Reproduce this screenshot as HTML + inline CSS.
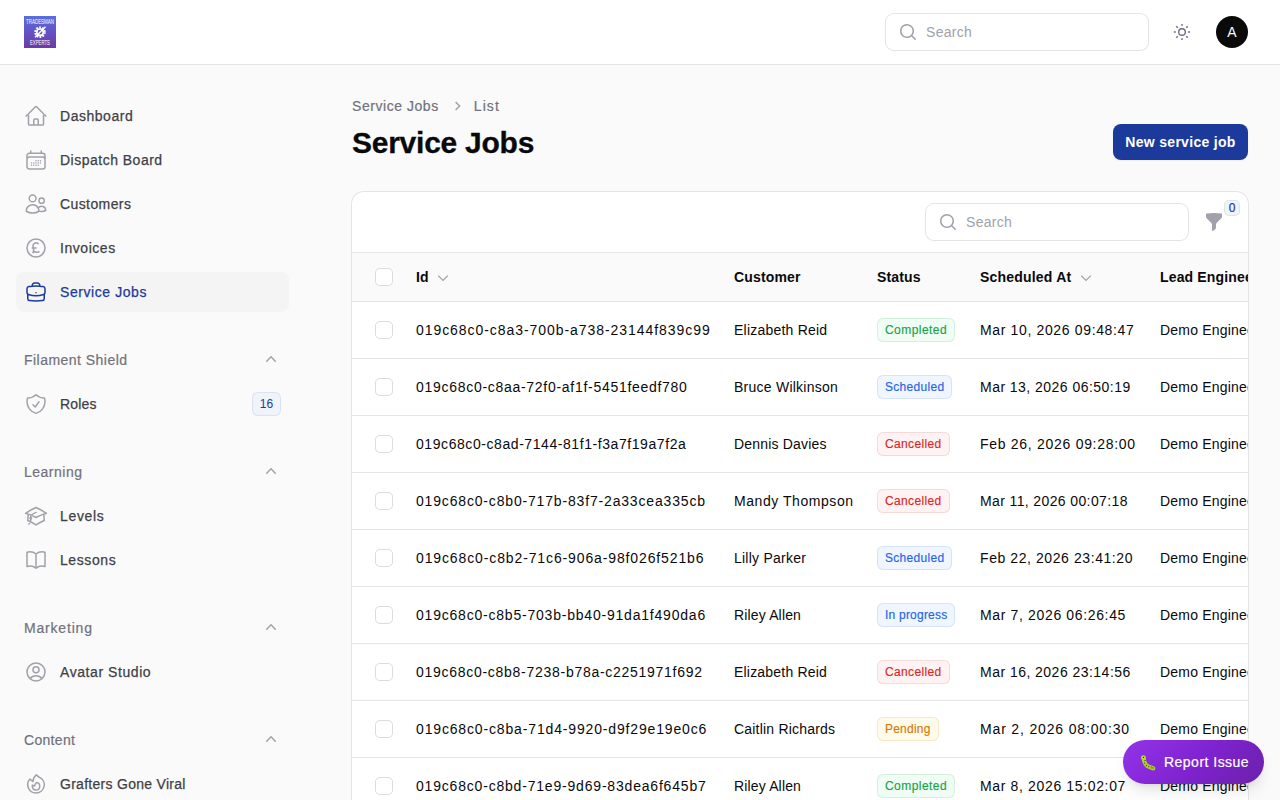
<!DOCTYPE html>
<html><head><meta charset="utf-8">
<style>
*{box-sizing:border-box;margin:0;padding:0}
html,body{width:1280px;height:800px;overflow:hidden;background:#fafafa;font-family:"Liberation Sans",sans-serif;color:#09090b}
.abs{position:absolute}
svg{display:block}
/* topbar */
#top{position:absolute;left:0;top:0;width:1280px;height:64px;background:#fff;box-shadow:0 1px 0 #e5e5e5,0 1px 2px rgba(0,0,0,.03)}
#logo{left:24px;top:16px;width:32px;height:32px;background:linear-gradient(180deg,#5a6fdc 0%,#6452c4 50%,#6c3aa6 100%);overflow:hidden}
.inp{position:absolute;background:#fff;border-radius:8px;box-shadow:0 0 0 1px #e4e4e7,0 1px 2px rgba(0,0,0,.04)}
.ph{position:absolute;font-size:14px;color:#a1a1aa;line-height:20px;letter-spacing:.3px}
#avatar{left:1216px;top:16px;width:32px;height:32px;border-radius:50%;background:#0a0a0a;color:#fff;font-size:14px;line-height:32px;text-align:center}
/* sidebar */
.nav{position:absolute;left:16px;width:273px;height:40px;border-radius:8px;display:flex;align-items:center;padding-left:8px}
.nav.active{background:#f4f4f5}
.nav svg{width:24px;height:24px;flex:none;color:#a1a1aa}
.nav span{margin-left:12px;font-size:14px;font-weight:500;color:#3f3f46;line-height:20px;letter-spacing:.4px;-webkit-text-stroke:.25px currentColor}
.nav.active svg,.nav.active span{color:#1b3a9b}
.grp{position:absolute;left:24px;width:257px;height:20px;font-size:14px;color:#71717a;line-height:20px;letter-spacing:.44px;-webkit-text-stroke:.2px currentColor}
.grp svg{position:absolute;right:0px;top:-1px;width:20px;height:20px;color:#a1a1aa}
.badge16{position:absolute;left:252px;top:392px;width:29px;height:24px;border-radius:6px;background:#f1f3fb;box-shadow:inset 0 0 0 1px #dde2f3;color:#1b3a9b;font-size:12px;line-height:24px;text-align:center;font-weight:500}
/* main */
#bc{left:352px;top:96px;height:20px;font-size:14px;line-height:20px;color:#71717a;display:flex;align-items:center;-webkit-text-stroke:.2px currentColor}
#title{left:352px;top:125px;font-size:30px;line-height:36px;font-weight:bold;color:#09090b;letter-spacing:-.25px;-webkit-text-stroke:.3px currentColor}
#newbtn{left:1113px;top:124px;width:135px;height:36px;border-radius:8px;background:#1b3a9b;color:#fff;font-size:14px;font-weight:bold;line-height:36px;text-align:center;letter-spacing:.3px;box-shadow:0 1px 2px rgba(0,0,0,.05)}
#card{left:352px;top:192px;width:896px;height:620px;background:#fff;border-radius:12px;box-shadow:0 0 0 1px #e5e5e5,0 1px 2px rgba(0,0,0,.04);overflow:hidden}
.thead{position:absolute;left:0;top:60px;width:896px;height:50px;background:#fafafa;border-top:1px solid #e5e5e5;border-bottom:1px solid #e5e5e5}
.th{position:absolute;top:0;height:48px;line-height:48px;font-size:14px;font-weight:bold;color:#09090b;white-space:nowrap}
.row{position:absolute;left:0;width:896px;height:57px;border-bottom:1px solid #e5e5e5}
.cb{position:absolute;left:24px;width:16px;height:16px;border-radius:4px;background:#fff;box-shadow:0 0 0 1px #dcdce0}
.td{position:absolute;top:0;height:56px;line-height:56px;font-size:14px;color:#09090b;white-space:nowrap}
.id{left:64px;letter-spacing:.96px}
.cu{left:382px;letter-spacing:.2px}
.dt{left:628px;letter-spacing:.62px}
.le{left:808px;letter-spacing:.2px}
.st{position:absolute;left:525px;top:16px;height:24px;border-radius:6px;font-size:12px;line-height:24px;padding:0 8px;font-weight:500;letter-spacing:.35px;-webkit-text-stroke:.15px currentColor}
.g{background:#f0fdf4;color:#16a34a;box-shadow:inset 0 0 0 1px #d3f1dc}
.b{background:#eff6ff;color:#2563eb;box-shadow:inset 0 0 0 1px #d5e3fb}
.r{background:#fef2f2;color:#dc2626;box-shadow:inset 0 0 0 1px #f8d9d9}
.y{background:#fffbeb;color:#d97706;box-shadow:inset 0 0 0 1px #f8e8c8}
#report{left:1123px;top:740px;width:141px;height:44px;border-radius:22px;background:linear-gradient(135deg,#9333ea 0%,#7e22ce 55%,#6b21a8 100%);box-shadow:0 10px 15px -3px rgba(0,0,0,.1),0 4px 6px -4px rgba(0,0,0,.1);color:#fff;font-size:14px;font-weight:500;line-height:44px}
</style></head><body>

<div id="top">
  <div id="logo" class="abs">
    <svg width="32" height="32" viewBox="0 0 32 32">
      <text x="16" y="8.4" fill="#fff" font-size="6.6" font-family="Liberation Sans" text-anchor="middle" textLength="28" lengthAdjust="spacingAndGlyphs">TRADESMAN</text>
      <g transform="translate(16 16.2)" fill="none" stroke="#fff">
        <circle r="4.6" stroke-width="2.4" stroke-dasharray="1.7 1.2"/>
        <circle r="3.2" stroke-width="1.6"/>
        <path d="M-5 5 L5.5 -5.5" stroke-width="1.4"/>
      </g>
      <text x="16" y="29.3" fill="#fff" font-size="6.6" font-family="Liberation Sans" text-anchor="middle" textLength="20" lengthAdjust="spacingAndGlyphs">EXPERTS</text>
    </svg>
  </div>
  <div class="inp" style="left:886px;top:14px;width:262px;height:36px">
    <svg class="abs" style="left:12px;top:8px" width="20" height="20" viewBox="0 0 20 20" fill="#a1a1aa"><path fill-rule="evenodd" d="M9 3.5a5.5 5.5 0 100 11 5.5 5.5 0 000-11zM2 9a7 7 0 1112.452 4.391l3.328 3.329a.75.75 0 11-1.06 1.06l-3.329-3.328A7 7 0 012 9z"/></svg>
    <div class="ph" style="left:40px;top:8px">Search</div>
  </div>
  <svg class="abs" style="left:1172px;top:22px" width="20" height="20" viewBox="0 0 20 20" stroke="#6b7280" fill="none" stroke-width="1.5" stroke-linecap="butt">
    <circle cx="10" cy="10" r="3.3" stroke-width="1.4"/>
    <path d="M10 1.9V3.85M10 16.15V18.1M1.9 10H3.85M16.15 10H18.1M4.27 4.27L5.76 5.76M15.73 4.27L14.24 5.76M4.27 15.73L5.76 14.24M15.73 15.73L14.24 14.24"/>
  </svg>
  <div id="avatar" class="abs">A</div>
</div>

<!-- sidebar -->
<div id="side">
<div class="nav" style="top:96px"><svg viewBox="0 0 24 24" fill="none" stroke="currentColor" stroke-width="1.5" stroke-linecap="round" stroke-linejoin="round"><path d="M2.25 12l8.954-8.955c.44-.439 1.152-.439 1.591 0L21.75 12M4.5 9.75v10.125c0 .621.504 1.125 1.125 1.125H9.75v-4.875c0-.621.504-1.125 1.125-1.125h2.25c.621 0 1.125.504 1.125 1.125V21h4.125c.621 0 1.125-.504 1.125-1.125V9.75M8.25 21h8.25"/></svg><span style="letter-spacing:0.525px">Dashboard</span></div>
<div class="nav" style="top:140px"><svg viewBox="0 0 24 24" fill="none" stroke="currentColor" stroke-width="1.5" stroke-linecap="round" stroke-linejoin="round"><path d="M6.75 3v2.25M17.25 3v2.25M3 18.75V7.5a2.25 2.25 0 012.25-2.25h13.5A2.25 2.25 0 0121 7.5v11.25m-18 0A2.25 2.25 0 005.25 21h13.5A2.25 2.25 0 0021 18.75m-18 0v-7.5A2.25 2.25 0 015.25 9h13.5A2.25 2.25 0 0121 11.25v7.5m-9-6h.008v.008H12v-.008zM12 15h.008v.008H12V15zm0 2.25h.008v.008H12v-.008zM9.75 15h.008v.008H9.75V15zm0 2.25h.008v.008H9.75v-.008zM7.5 15h.008v.008H7.5V15zm0 2.25h.008v.008H7.5v-.008zm6.75-4.5h.008v.008h-.008v-.008zm0 2.25h.008v.008h-.008V15zm0 2.25h.008v.008h-.008v-.008zm2.25-4.5h.008v.008H16.5v-.008zm0 2.25h.008v.008H16.5V15z"/></svg><span style="letter-spacing:0.492px">Dispatch Board</span></div>
<div class="nav" style="top:184px"><svg viewBox="0 0 24 24" fill="none" stroke="currentColor" stroke-width="1.5" stroke-linecap="round" stroke-linejoin="round"><path d="M15 19.128a9.38 9.38 0 002.625.372 9.337 9.337 0 004.121-.952 4.125 4.125 0 00-7.533-2.493M15 19.128v-.003c0-1.113-.285-2.16-.786-3.07M15 19.128v.106A12.318 12.318 0 018.624 21c-2.331 0-4.512-.645-6.374-1.766l-.001-.109a6.375 6.375 0 0111.964-3.07M12 6.375a3.375 3.375 0 11-6.75 0 3.375 3.375 0 016.75 0zm8.25 2.25a2.625 2.625 0 11-5.25 0 2.625 2.625 0 015.25 0z"/></svg><span style="letter-spacing:0.400px">Customers</span></div>
<div class="nav" style="top:228px"><svg viewBox="0 0 24 24" fill="none" stroke="currentColor" stroke-width="1.5" stroke-linecap="round" stroke-linejoin="round"><path d="M14.121 7.629A3 3 0 009.017 9.43c-.023.212-.002.425.028.636l.506 3.541a4.5 4.5 0 01-.43 2.65L9 16.5l1.539-.513a2.25 2.25 0 011.422 0l.655.218a2.25 2.25 0 001.718-.122L15 15.75M8.25 12H12m9 0a9 9 0 11-18 0 9 9 0 0118 0z"/></svg><span style="letter-spacing:0.543px">Invoices</span></div>
<div class="nav active" style="top:272px"><svg viewBox="0 0 24 24" fill="none" stroke="currentColor" stroke-width="1.5" stroke-linecap="round" stroke-linejoin="round"><path d="M20.25 14.15v4.25c0 1.094-.787 2.036-1.872 2.18-2.087.277-4.216.42-6.378.42s-4.291-.143-6.378-.42c-1.085-.144-1.872-1.086-1.872-2.18v-4.25m16.5 0a2.18 2.18 0 00.75-1.661V8.706c0-1.081-.768-2.015-1.837-2.175a48.114 48.114 0 00-3.413-.387m4.5 8.006c-.194.165-.42.295-.673.38A23.978 23.978 0 0112 15.75c-2.648 0-5.195-.429-7.577-1.22a2.016 2.016 0 01-.673-.38m0 0A2.18 2.18 0 013 12.489V8.706c0-1.081.768-2.015 1.837-2.175a48.111 48.111 0 013.413-.387m7.5 0V5.25A2.25 2.25 0 0013.5 3h-3a2.25 2.25 0 00-2.25 2.25v.894m7.5 0a48.667 48.667 0 00-7.5 0M12 12.75h.008v.008H12v-.008z"/></svg><span style="letter-spacing:0.573px">Service Jobs</span></div>
<div class="grp" style="top:350px;letter-spacing:0.469px">Filament Shield<svg viewBox="0 0 20 20" fill="currentColor"><path fill-rule="evenodd" d="M14.77 12.79a.75.75 0 01-1.06-.02L10 8.832 6.29 12.77a.75.75 0 11-1.08-1.04l4.25-4.5a.75.75 0 011.08 0l4.25 4.5a.75.75 0 01-.02 1.06z"/></svg></div>
<div class="nav" style="top:384px"><svg viewBox="0 0 24 24" fill="none" stroke="currentColor" stroke-width="1.5" stroke-linecap="round" stroke-linejoin="round"><path d="M9 12.75L11.25 15 15 9.75m-3-7.036A11.959 11.959 0 013.598 6 11.99 11.99 0 003 9.749c0 5.592 3.824 10.29 9 11.623 5.176-1.332 9-6.03 9-11.622 0-1.31-.21-2.571-.598-3.751h-.152c-3.196 0-6.1-1.248-8.25-3.285z"/></svg><span style="letter-spacing:0.150px">Roles</span></div>
<div class="badge16">16</div>
<div class="grp" style="top:462px;letter-spacing:0.497px">Learning<svg viewBox="0 0 20 20" fill="currentColor"><path fill-rule="evenodd" d="M14.77 12.79a.75.75 0 01-1.06-.02L10 8.832 6.29 12.77a.75.75 0 11-1.08-1.04l4.25-4.5a.75.75 0 011.08 0l4.25 4.5a.75.75 0 01-.02 1.06z"/></svg></div>
<div class="nav" style="top:496px"><svg viewBox="0 0 24 24" fill="none" stroke="currentColor" stroke-width="1.5" stroke-linecap="round" stroke-linejoin="round"><path d="M4.26 10.147a60.436 60.436 0 00-.491 6.347A48.627 48.627 0 0112 20.904a48.627 48.627 0 018.232-4.41 60.46 60.46 0 00-.491-6.347m-15.482 0a50.57 50.57 0 00-2.658-.813A59.905 59.905 0 0112 3.493a59.902 59.902 0 0110.399 5.84c-.896.248-1.783.52-2.658.814m-15.482 0A50.697 50.697 0 0112 13.489a50.702 50.702 0 017.74-3.342M6.75 15a.75.75 0 100-1.5.75.75 0 000 1.5zm0 0v-3.675A55.378 55.378 0 0112 8.443m-7.007 11.55A5.981 5.981 0 006.75 15.75v-1.5"/></svg><span style="letter-spacing:0.660px">Levels</span></div>
<div class="nav" style="top:540px"><svg viewBox="0 0 24 24" fill="none" stroke="currentColor" stroke-width="1.5" stroke-linecap="round" stroke-linejoin="round"><path d="M12 6.042A8.967 8.967 0 006 3.75c-1.052 0-2.062.18-3 .512v14.25A8.987 8.987 0 016 18c2.305 0 4.408.867 6 2.292m0-14.25a8.966 8.966 0 016-2.292c1.052 0 2.062.18 3 .512v14.25A8.987 8.987 0 0018 18a8.967 8.967 0 00-6 2.292m0-14.25v14.25"/></svg><span style="letter-spacing:0.583px">Lessons</span></div>
<div class="grp" style="top:618px;letter-spacing:0.815px">Marketing<svg viewBox="0 0 20 20" fill="currentColor"><path fill-rule="evenodd" d="M14.77 12.79a.75.75 0 01-1.06-.02L10 8.832 6.29 12.77a.75.75 0 11-1.08-1.04l4.25-4.5a.75.75 0 011.08 0l4.25 4.5a.75.75 0 01-.02 1.06z"/></svg></div>
<div class="nav" style="top:652px"><svg viewBox="0 0 24 24" fill="none" stroke="currentColor" stroke-width="1.5" stroke-linecap="round" stroke-linejoin="round"><path d="M17.982 18.725A7.488 7.488 0 0012 15.75a7.488 7.488 0 00-5.982 2.975m11.963 0a9 9 0 10-11.963 0m11.963 0A8.966 8.966 0 0112 21a8.966 8.966 0 01-5.982-2.275M15 9.75a3 3 0 11-6 0 3 3 0 016 0z"/></svg><span style="letter-spacing:0.567px">Avatar Studio</span></div>
<div class="grp" style="top:730px;letter-spacing:0.307px">Content<svg viewBox="0 0 20 20" fill="currentColor"><path fill-rule="evenodd" d="M14.77 12.79a.75.75 0 01-1.06-.02L10 8.832 6.29 12.77a.75.75 0 11-1.08-1.04l4.25-4.5a.75.75 0 011.08 0l4.25 4.5a.75.75 0 01-.02 1.06z"/></svg></div>
<div class="nav" style="top:764px"><svg viewBox="0 0 24 24" fill="none" stroke="currentColor" stroke-width="1.5" stroke-linecap="round" stroke-linejoin="round"><path d="M15.362 5.214A8.252 8.252 0 0112 21 8.25 8.25 0 016.038 7.048 8.287 8.287 0 009 9.6a8.983 8.983 0 013.361-6.867 8.21 8.21 0 003 2.48z"/><path d="M12 18a3.75 3.75 0 00.495-7.467 5.99 5.99 0 00-1.925 3.546 5.974 5.974 0 01-2.133-1A3.75 3.75 0 0012 18z"/></svg><span style="letter-spacing:0.283px">Grafters Gone Viral</span></div>
</div>

<!-- main -->
<div id="bc" class="abs">
  <span style="letter-spacing:.55px">Service Jobs</span>
  <svg style="margin:0 11px 0 14px" width="10" height="20" viewBox="0 0 10 20" fill="none" stroke="#a1a1aa" stroke-width="1.5"><path d="M2.6 6L6.6 10l-4 4"/></svg>
  <span style="letter-spacing:1.1px">List</span>
</div>
<div id="title" class="abs">Service Jobs</div>
<div id="newbtn" class="abs">New service job</div>

<div id="card" class="abs">
<div class="inp" style="left:574px;top:12px;width:262px;height:36px">
    <svg class="abs" style="left:12px;top:8px" width="20" height="20" viewBox="0 0 20 20" fill="#a1a1aa"><path fill-rule="evenodd" d="M9 3.5a5.5 5.5 0 100 11 5.5 5.5 0 000-11zM2 9a7 7 0 1112.452 4.391l3.328 3.329a.75.75 0 11-1.06 1.06l-3.329-3.328A7 7 0 012 9z"/></svg>
    <div class="ph" style="left:40px;top:8px">Search</div>
  </div>
<svg class="abs" style="left:852px;top:20px" width="20" height="20" viewBox="0 0 20 20" fill="#a1a1aa"><path fill-rule="evenodd" d="M2.628 1.601C5.028 1.206 7.49 1 10 1s4.973.206 7.372.601a.75.75 0 01.628.74v2.288a2.25 2.25 0 01-.659 1.59l-4.682 4.683a2.25 2.25 0 00-.659 1.59v3.037c0 .684-.31 1.33-.844 1.757l-1.937 1.55A.75.75 0 018 18.25v-5.757a2.25 2.25 0 00-.659-1.591L2.659 6.22A2.25 2.25 0 012 4.629V2.34a.75.75 0 01.628-.74z"/></svg>
<div class="abs" style="left:872px;top:8px;width:16px;height:16px;border-radius:5px;background:#f1f3fb;box-shadow:inset 0 0 0 1px #dde2f3;color:#1b3a9b;font-size:12px;line-height:16px;text-align:center;-webkit-text-stroke:.2px currentColor">0</div>
<div class="thead"><div class="cb" style="top:16px"></div><div class="th" style="left:64px">Id</div><div style="position:absolute;left:85px;top:0"><svg style="position:absolute;top:19px" width="12" height="12" viewBox="0 0 12 12" fill="none" stroke="#a1a1aa" stroke-width="1.3"><path d="M1.2 3.6l4.8 4.8 4.8-4.8"/></svg></div><div class="th" style="left:382px;letter-spacing:.15px">Customer</div><div class="th" style="left:525px;letter-spacing:.15px">Status</div><div class="th" style="left:628px;letter-spacing:.2px">Scheduled At</div><div style="position:absolute;left:728px;top:0"><svg style="position:absolute;top:19px" width="12" height="12" viewBox="0 0 12 12" fill="none" stroke="#a1a1aa" stroke-width="1.3"><path d="M1.2 3.6l4.8 4.8 4.8-4.8"/></svg></div><div class="th" style="left:808px;letter-spacing:.15px">Lead Engineer</div></div>
<div class="row" style="top:110px"><div class="cb" style="top:20px"></div><div class="td id" style="letter-spacing:0.940px">019c68c0-c8a3-700b-a738-23144f839c99</div><div class="td cu" style="letter-spacing:0.215px">Elizabeth Reid</div><div class="st g" style="letter-spacing:0.44px">Completed</div><div class="td dt" style="letter-spacing:0.645px">Mar 10, 2026 09:48:47</div><div class="td le">Demo Engineer</div></div>
<div class="row" style="top:167px"><div class="cb" style="top:20px"></div><div class="td id" style="letter-spacing:0.711px">019c68c0-c8aa-72f0-af1f-5451feedf780</div><div class="td cu" style="letter-spacing:0.243px">Bruce Wilkinson</div><div class="st b" style="letter-spacing:0.295px">Scheduled</div><div class="td dt" style="letter-spacing:0.465px">Mar 13, 2026 06:50:19</div><div class="td le">Demo Engineer</div></div>
<div class="row" style="top:224px"><div class="cb" style="top:20px"></div><div class="td id" style="letter-spacing:0.569px">019c68c0-c8ad-7144-81f1-f3a7f19a7f2a</div><div class="td cu" style="letter-spacing:0.183px">Dennis Davies</div><div class="st r" style="letter-spacing:0.35px">Cancelled</div><div class="td dt" style="letter-spacing:0.710px">Feb 26, 2026 09:28:00</div><div class="td le">Demo Engineer</div></div>
<div class="row" style="top:281px"><div class="cb" style="top:20px"></div><div class="td id" style="letter-spacing:0.829px">019c68c0-c8b0-717b-83f7-2a33cea335cb</div><div class="td cu" style="letter-spacing:0.554px">Mandy Thompson</div><div class="st r" style="letter-spacing:0.35px">Cancelled</div><div class="td dt" style="letter-spacing:0.380px">Mar 11, 2026 00:07:18</div><div class="td le">Demo Engineer</div></div>
<div class="row" style="top:338px"><div class="cb" style="top:20px"></div><div class="td id" style="letter-spacing:0.877px">019c68c0-c8b2-71c6-906a-98f026f521b6</div><div class="td cu" style="letter-spacing:0.236px">Lilly Parker</div><div class="st b" style="letter-spacing:0.295px">Scheduled</div><div class="td dt" style="letter-spacing:0.580px">Feb 22, 2026 23:41:20</div><div class="td le">Demo Engineer</div></div>
<div class="row" style="top:395px"><div class="cb" style="top:20px"></div><div class="td id" style="letter-spacing:0.789px">019c68c0-c8b5-703b-bb40-91da1f490da6</div><div class="td cu" style="letter-spacing:0.150px">Riley Allen</div><div class="st b" style="letter-spacing:0.22px">In progress</div><div class="td dt" style="letter-spacing:0.646px">Mar 7, 2026 06:26:45</div><div class="td le">Demo Engineer</div></div>
<div class="row" style="top:452px"><div class="cb" style="top:20px"></div><div class="td id" style="letter-spacing:0.720px">019c68c0-c8b8-7238-b78a-c2251971f692</div><div class="td cu" style="letter-spacing:0.200px">Elizabeth Reid</div><div class="st r" style="letter-spacing:0.35px">Cancelled</div><div class="td dt" style="letter-spacing:0.470px">Mar 16, 2026 23:14:56</div><div class="td le">Demo Engineer</div></div>
<div class="row" style="top:509px"><div class="cb" style="top:20px"></div><div class="td id" style="letter-spacing:0.846px">019c68c0-c8ba-71d4-9920-d9f29e19e0c6</div><div class="td cu" style="letter-spacing:0.200px">Caitlin Richards</div><div class="st y" style="letter-spacing:0.22px">Pending</div><div class="td dt" style="letter-spacing:0.841px">Mar 2, 2026 08:00:30</div><div class="td le">Demo Engineer</div></div>
<div class="row" style="top:566px"><div class="cb" style="top:20px"></div><div class="td id" style="letter-spacing:0.806px">019c68c0-c8bd-71e9-9d69-83dea6f645b7</div><div class="td cu" style="letter-spacing:0.150px">Riley Allen</div><div class="st g" style="letter-spacing:0.44px">Completed</div><div class="td dt" style="letter-spacing:0.646px">Mar 8, 2026 15:02:07</div><div class="td le">Demo Engineer</div></div>
</div>

<div id="report" class="abs">
  <svg class="abs" style="left:16px;top:13px" width="18" height="18" viewBox="0 0 18 18">
    <path d="M4.6 5 C5 8.5 5.6 11 8 12.8 C10 14.2 12.5 14.8 14.2 15.3" fill="none" stroke="#aad622" stroke-width="4.2" stroke-linecap="round"/>
    <circle cx="4.4" cy="4.6" r="2.4" fill="#b4e020"/>
    <circle cx="4.5" cy="4.4" r=".65" fill="#1a1a1a"/>
    <g fill="#2a2a2a"><circle cx="6" cy="7.5" r=".6"/><circle cx="5.6" cy="10" r=".6"/><circle cx="7.5" cy="12.3" r=".6"/><circle cx="9.8" cy="13.3" r=".6"/><circle cx="12.2" cy="14" r=".6"/><circle cx="14" cy="14.9" r=".6"/></g>
    <g fill="#e8731a"><circle cx="4.6" cy="11" r=".55"/><circle cx="6.8" cy="13.6" r=".55"/><circle cx="9.6" cy="14.8" r=".55"/><circle cx="12.4" cy="15.6" r=".55"/></g>
  </svg>
  <span style="position:absolute;left:41px;top:0;letter-spacing:.48px;-webkit-text-stroke:.2px currentColor">Report Issue</span>
</div>

</body></html>
